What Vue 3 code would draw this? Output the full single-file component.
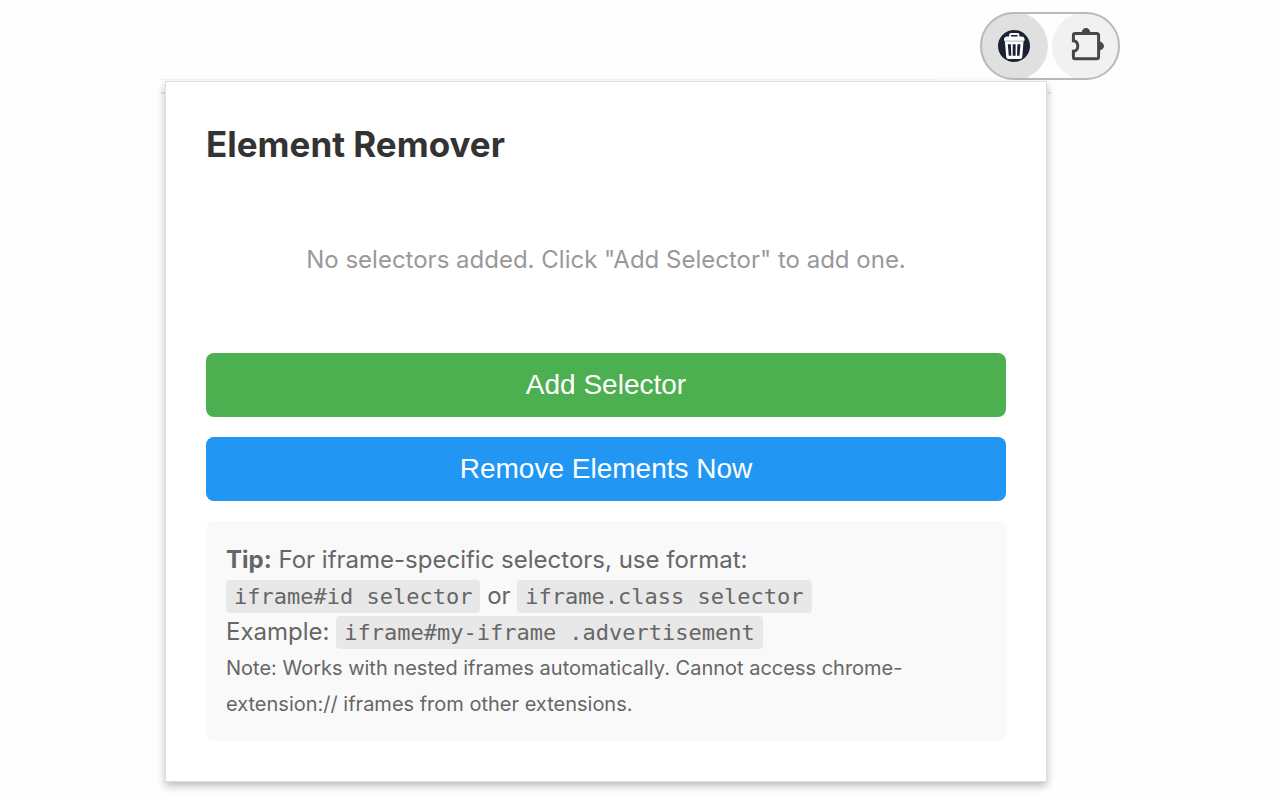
<script setup>
import { ref } from 'vue'

const emptyText = ref('No selectors added. Click "Add Selector" to add one.')
</script>

<template>
  <main class="page">
    <!-- Browser toolbar -->
    <header class="toolbar">
      <div class="toolbar-pill">
        <button class="tool active" type="button" aria-label="Element Remover">
          <svg width="36" height="36" viewBox="0 0 36 36" aria-hidden="true">
            <circle cx="18" cy="18" r="16" fill="#1b2232" />
            <path d="M14 9.5V7q0-1 1-1h6.5q1 0 1 1v2.5" fill="none" stroke="#fff" stroke-width="1.8" />
            <path d="M11 8.6h14.600q2.400 0 3 2.400v1.800H8v-1.800q.6-2.400 3-2.400z" fill="#fff" />
            <path d="M8.8 12.6h18.8l-1.4 16.4q-.2 2-2.200 2H12.400q-2 0-2.200-2z" fill="#fff" />
            <path d="M11.8 16.3h3.1l.4 11.4h-2.5zM16.7 16.3h2.9v11.4h-2.9zM21.4 16.3h3.1l-1 11.4h-2.5z" fill="#1b2232" />
            <path d="M9.4 13.4h17.6" stroke="#9296a0" stroke-width=".5" />
          </svg>
        </button>
        <button class="tool" type="button" aria-label="Extensions">
          <svg width="36" height="36" viewBox="0 0 36 36" aria-hidden="true">
            <path
              d="M7.2 5.5h21.4q2 0 2 2v21.2q0 2-2 2H7.2q-1.800 0-1.800-1.800v-5.600c2.600 0 4.400-2.300 4.400-5.300s-1.800-5.300-4.400-5.300V7.300q0-1.800 1.800-1.800z"
              fill="none"
              stroke="#474747"
              stroke-width="3"
            />
            <path d="M13.6 5a4.4 5 0 0 1 8.8 0zM31 13.6a5 4.4 0 0 1 0 8.8z" fill="#474747" />
          </svg>
        </button>
      </div>
    </header>

    <!-- Popup -->
    <section class="popup">
      <h1>Element Remover</h1>
      <p class="empty">{{ emptyText }}</p>
      <div class="actions">
        <button class="btn btn-add" type="button">Add Selector</button>
        <button class="btn btn-remove" type="button">Remove Elements Now</button>
      </div>
      <div class="tip">
        <strong>Tip:</strong> For iframe-specific selectors, use format:<br />
        <code>iframe#id selector</code> or <code>iframe.class selector</code><br />
        Example: <code>iframe#my-iframe .advertisement</code>
        <small>Note: Works with nested iframes automatically. Cannot access chrome-extension:// iframes from other extensions.</small>
      </div>
    </section>
  </main>
</template>

<style>
body {
  margin: 0;
  background: #fefefe;
}
</style>

<style scoped>
.page {
  max-width: 960px;
  margin: 0 auto;
  padding: 12px 0;
  box-sizing: border-box;
  font-family: Inter, "Liberation Sans", sans-serif;
}

/* TOOLBAR */
.toolbar {
  display: flex;
  justify-content: flex-end;
}

.toolbar-pill {
  display: flex;
  gap: 4px;
  border-radius: 34px;
  position: relative;
}

.toolbar-pill::after {
  content: "";
  position: absolute;
  inset: 0;
  border: 2px solid #bababa;
  border-radius: 34px;
  pointer-events: none;
}

.tool {
  display: flex;
  align-items: center;
  justify-content: center;
  width: 68px;
  height: 68px;
  padding: 0;
  border: 0;
  border-radius: 50%;
  background: #f1f1f1;
}

.tool.active {
  background: #e0e0e0;
}

/* POPUP */
.popup {
  position: relative;
  max-width: 882px;
  box-sizing: border-box;
  margin: 1px 5px 0;
  padding: 40px;
  border: 1px solid #dedede;
  background: #fff;
  box-shadow: 0 4px 8px rgba(0, 0, 0, 0.25);
}

/* page edge showing behind the popup */
.popup::before {
  content: "";
  position: absolute;
  top: -3px;
  left: -5px;
  width: 88%;
  height: 1px;
  background: #edf1f5;
}

.popup::after {
  content: "";
  position: absolute;
  top: 10px;
  left: -5px;
  right: -5px;
  height: 2px;
  background: #d4d4d4;
  clip-path: polygon(0 0, 4px 0, 4px 100%, 0 100%, 0 0, 100% 0, 100% 100%, calc(100% - 4px) 100%, calc(100% - 4px) 0, 0 0);
}

h1 {
  margin: 0 0 40px;
  font-size: 35px;
  line-height: 44px;
  font-weight: 700;
  color: #333;
}

.empty {
  margin: 0 0 40px;
  padding: 40px 0;
  font-size: 24px;
  line-height: 27px;
  text-align: center;
  color: #999;
}

.actions {
  display: flex;
  flex-direction: column;
  gap: 20px;
  margin-bottom: 20px;
}

.btn {
  height: 64px;
  padding: 0 20px;
  border: 0;
  border-radius: 8px;
  font-family: "Liberation Sans", Arial, sans-serif;
  font-size: 28px;
  color: #fff;
}

.btn-add {
  background: #4caf50;
}

.btn-remove {
  background: #2196f3;
}

.tip {
  padding: 21px 20px 19px;
  border-radius: 8px;
  background: #f9f9f9;
  font-size: 24px;
  line-height: 36px;
  color: #666;
}

.tip code {
  padding: 4px 8px;
  border-radius: 4px;
  background: #e8e8e8;
  font-family: "DejaVu Sans Mono", monospace;
  font-size: 22px;
  line-height: 24px;
}

.tip small {
  display: block;
  font-size: 20px;
}
</style>
